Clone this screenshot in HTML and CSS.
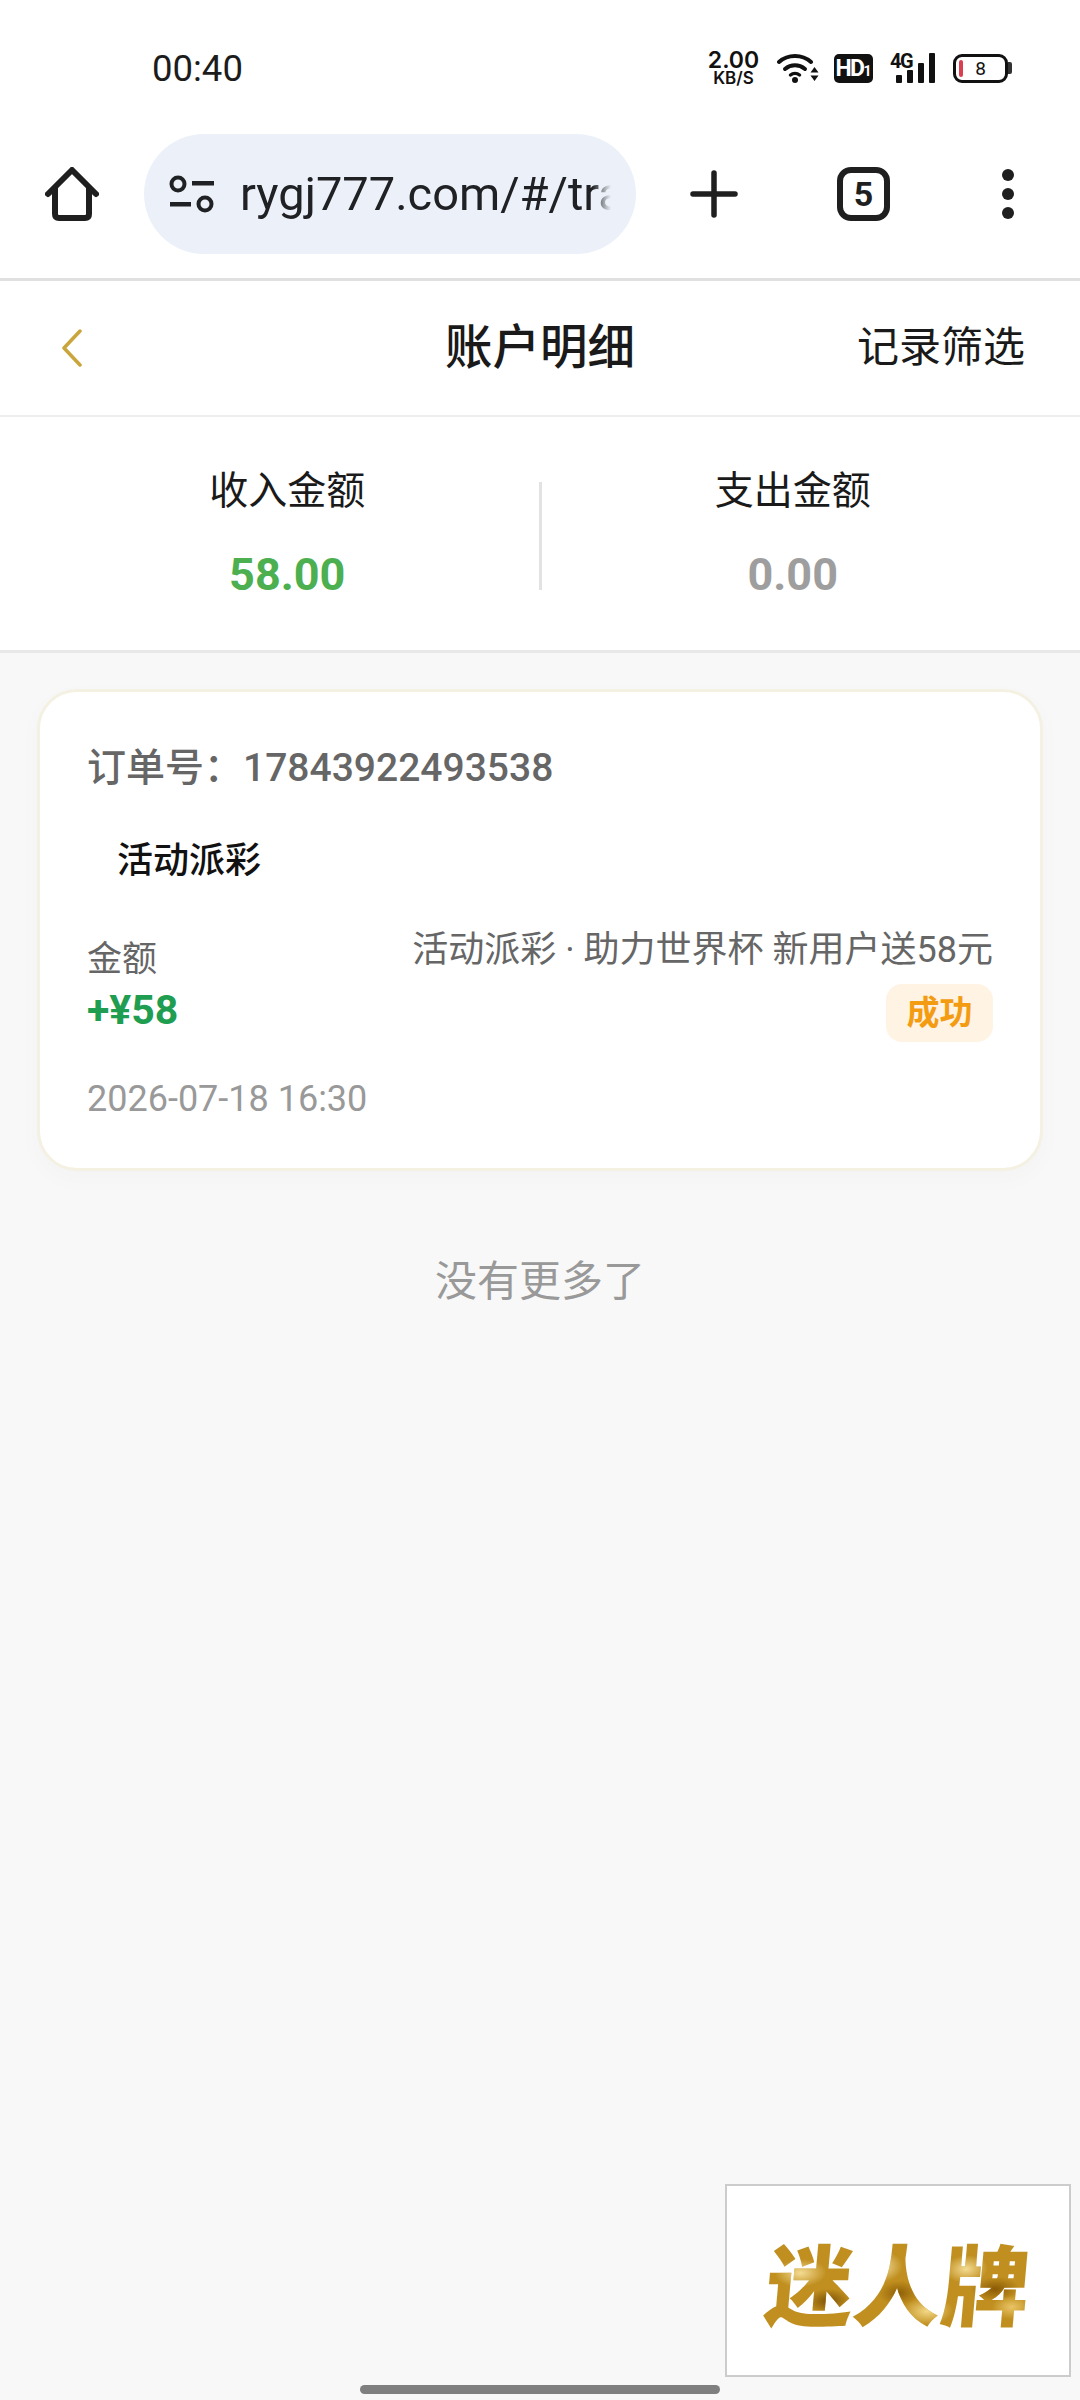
FILE: index.html
```html
<!DOCTYPE html>
<html lang="zh-CN">
<head>
    <meta charset="UTF-8">
    <meta name="viewport" content="width=device-width, initial-scale=1.0">
    <title>账户明细</title>
    <link rel="stylesheet" href="styles.css">
</head>
<body>
    <div class="status-bar">
        <span class="time">00:40</span>
        <div class="status-icons">
            <div class="speed"><span class="speed-num">2.00</span><span class="speed-unit">KB/S</span></div>
            <svg class="wifi" width="42" height="32" viewBox="0 0 42 32">
                <path d="M2 10 C11 2 25 2 34 10" fill="none" stroke="#111" stroke-width="4" stroke-linecap="round"/>
                <path d="M8 17 C14 12 22 12 28 17" fill="none" stroke="#111" stroke-width="4" stroke-linecap="round"/>
                <path d="M13.5 23 C16 21 20 21 22.5 23" fill="none" stroke="#111" stroke-width="3.5" stroke-linecap="round"/>
                <circle cx="18" cy="28" r="3" fill="#111"/>
                <path d="M33.5 20.5 L37.5 15 L41.5 20.5 Z M33.5 23.5 L37.5 29 L41.5 23.5 Z" fill="#111"/>
            </svg>
            <div class="hd">HD<span class="hd-one">1</span></div>
            <div class="signal">
                <span class="signal-type">4G</span>
                <div class="signal-bars">
                    <i class="bar bar-1"></i>
                    <i class="bar bar-2"></i>
                    <i class="bar bar-3"></i>
                    <i class="bar bar-4"></i>
                </div>
            </div>
            <div class="battery">
                <div class="battery-body"><i class="battery-level"></i><span class="battery-num">8</span></div>
                <i class="battery-cap"></i>
            </div>
        </div>
    </div>

    <div class="toolbar">
        <svg class="home-icon" width="54" height="54" viewBox="0 0 54 54">
            <path d="M3 27 L27 3 L51 27 M10 21 V47 Q10 51 14 51 H40 Q44 51 44 47 V21" fill="none" stroke="#1f1f1f" stroke-width="6" stroke-linecap="round" stroke-linejoin="round"/>
        </svg>
        <div class="url-pill">
            <svg class="tune-icon" width="45" height="38" viewBox="0 0 45 38">
                <circle cx="9" cy="9" r="6.5" fill="none" stroke="#202124" stroke-width="4"/>
                <rect x="23" y="6" width="22" height="4.5" fill="#202124"/>
                <rect x="1" y="27" width="21" height="4.5" fill="#202124"/>
                <circle cx="36" cy="29" r="6.5" fill="none" stroke="#202124" stroke-width="4"/>
            </svg>
            <span class="url-text">rygj777.com/#/transaction</span>
        </div>
        <svg class="plus-icon" width="48" height="48" viewBox="0 0 48 48">
            <path d="M24 3 V45 M3 24 H45" fill="none" stroke="#1f1f1f" stroke-width="5.5" stroke-linecap="round"/>
        </svg>
        <div class="tab-count">5</div>
        <div class="more-dots"><i></i><i></i><i></i></div>
    </div>

    <div class="nav-bar">
        <svg class="back-icon" width="21" height="38" viewBox="0 0 21 38">
            <path d="M19 2 L3 19 L19 36" fill="none" stroke="#c9a53c" stroke-width="3.5" stroke-linecap="round" stroke-linejoin="round"/>
        </svg>
        <h1 class="nav-title">账户明细</h1>
        <span class="nav-action">记录筛选</span>
    </div>

    <div class="summary">
        <div class="summary-col">
            <div class="summary-label">收入金额</div>
            <div class="summary-value income">58.00</div>
        </div>
        <div class="summary-divider"></div>
        <div class="summary-col">
            <div class="summary-label">支出金额</div>
            <div class="summary-value expense">0.00</div>
        </div>
    </div>

    <div class="card">
        <div class="order-no">订单号：17843922493538</div>
        <div class="order-type">活动派彩</div>
        <div class="order-info">
            <div class="amount-col">
                <div class="amount-label">金额</div>
                <div class="amount-value">+¥58</div>
            </div>
            <div class="desc-col">
                <div class="desc-text">活动派彩 · 助力世界杯 新用户送58元</div>
                <span class="status-badge">成功</span>
            </div>
        </div>
        <div class="order-date">2026-07-18 16:30</div>
    </div>

    <div class="no-more">没有更多了</div>

    <!-- floating brand box -->
    <div class="brand-box"><span class="brand-text">迷人牌</span></div>
    <div class="home-indicator"></div>
</body>
</html>
```

FILE: styles.css
```css
* {
    box-sizing: border-box;
}
html, body {
    height: 2400px;
}
body {
    margin: 0;
    position: relative;
    overflow: hidden;
    background-color: #f8f8f8;
    font-family: Roboto, "Noto Sans CJK SC", sans-serif;
    color: #1a1a1a;
}

/* status bar */
.status-bar {
    height: 134px;
    padding: 50px 68px 0 152px;
    display: flex;
    justify-content: space-between;
    align-items: flex-start;
    background-color: #fff;
}
.time {
    font-size: 36.5px;
    line-height: 38px;
    color: #1c1c1c;
}
.status-icons {
    display: flex;
    align-items: center;
    height: 36px;
}
.speed {
    width: 51px;
    display: flex;
    flex-direction: column;
    align-items: center;
    color: #111;
    font-family: Inter, Roboto, sans-serif;
    font-weight: 600;
}
.speed-num {
    font-size: 23px;
    line-height: 20px;
}
.speed-unit {
    font-size: 17px;
    line-height: 16px;
}
.wifi {
    margin-left: 18px;
}
.hd {
    width: 39px;
    height: 29px;
    margin-left: 15px;
    background-color: #111;
    border-radius: 5px;
    color: #fff;
    font-size: 23px;
    font-weight: 700;
    line-height: 29px;
    text-align: center;
    letter-spacing: -1.5px;
}
.hd-one {
    font-size: 14px;
    letter-spacing: 0;
}
.signal {
    position: relative;
    width: 45px;
    height: 30px;
    margin-left: 17px;
}
.signal-type {
    position: absolute;
    left: 0;
    top: -2px;
    font-size: 20px;
    font-weight: 700;
    line-height: 20px;
    letter-spacing: -1.5px;
    color: #111;
}
.signal-bars {
    height: 30px;
    padding-left: 6px;
    display: flex;
    align-items: flex-end;
    gap: 5px;
}
.bar {
    width: 6px;
    background-color: #111;
    border-radius: 1px;
}
.bar-1 { height: 8px; }
.bar-2 { height: 13px; }
.bar-3 { height: 20px; }
.bar-4 { height: 30px; }
.battery {
    display: flex;
    align-items: center;
    margin-left: 18px;
}
.battery-body {
    width: 55px;
    height: 29px;
    border: 3px solid #111;
    border-radius: 9px;
    padding-left: 3px;
    display: flex;
    align-items: center;
    position: relative;
}
.battery-level {
    width: 4px;
    height: 17px;
    background-color: #d8404f;
    border-radius: 2px;
}
.battery-num {
    flex: 1;
    padding-right: 7px;
    text-align: center;
    font-size: 19px;
    line-height: 23px;
    color: #111;
}
.battery-cap {
    width: 4px;
    height: 12px;
    background-color: #333;
    border-radius: 0 2px 2px 0;
}

/* browser toolbar */
.toolbar {
    height: 147px;
    padding: 0 0 24px 45px;
    display: flex;
    align-items: center;
    background-color: #fff;
    border-bottom: 3px solid #e0e0e0;
}
.url-pill {
    width: 492px;
    height: 120px;
    margin-left: 45px;
    padding: 0 25px;
    display: flex;
    align-items: center;
    gap: 26px;
    flex-shrink: 0;
    background-color: #ecf1f9;
    border-radius: 60px;
}
.tune-icon {
    flex-shrink: 0;
}
.url-text {
    flex: 1;
    overflow: hidden;
    white-space: nowrap;
    font-size: 47px;
    line-height: 64px;
    color: #202124;
    -webkit-mask-image: linear-gradient(to right, #000 95%, transparent);
    mask-image: linear-gradient(to right, #000 95%, transparent);
}
.plus-icon {
    margin-left: 54px;
}
.tab-count {
    width: 53px;
    height: 54px;
    margin-left: 99px;
    border: 6px solid #1f1f1f;
    border-radius: 14px;
    font-size: 34px;
    font-weight: 700;
    line-height: 42px;
    text-align: center;
    color: #1f1f1f;
}
.more-dots {
    margin-left: 112px;
    display: flex;
    flex-direction: column;
    gap: 7px;
}
.more-dots i {
    width: 12px;
    height: 12px;
    background-color: #1f1f1f;
    border-radius: 50%;
}

/* page header */
.nav-bar {
    height: 136px;
    padding: 0 55px;
    display: grid;
    grid-template-columns: 1fr auto 1fr;
    align-items: center;
    background-color: #fff;
    border-bottom: 2px solid #eee;
}
.back-icon {
    margin-left: 6px;
}
.nav-title {
    margin: 0;
    font-size: 47.5px;
    font-weight: 500;
    line-height: 60px;
    color: #1a1a1a;
}
.nav-action {
    justify-self: end;
    font-size: 42px;
    line-height: 58px;
    color: #1a1a1a;
}

/* income / expense */
.summary {
    height: 236px;
    padding: 49px 36px 0;
    display: flex;
    align-items: flex-start;
    background-color: #fff;
    border-bottom: 3px solid #e8e8e8;
}
.summary-col {
    flex: 1;
    text-align: center;
}
.summary-label {
    font-size: 39px;
    line-height: 50px;
    color: #1a1a1a;
}
.summary-value {
    margin-top: 31px;
    font-size: 45px;
    font-weight: 700;
    line-height: 56px;
}
.income {
    color: #4caf50;
}
.expense {
    color: #9e9e9e;
}
.summary-divider {
    width: 3px;
    height: 108px;
    margin-top: 16px;
    background-color: #e2e2e2;
}

/* record card */
.card {
    margin: 36px 37px 0;
    padding: 51px 47px 47px;
    background-color: #fff;
    border: 3px solid #f4f1e3;
    border-radius: 40px;
    box-shadow: 0 8px 24px rgba(0, 0, 0, 0.025);
}
.order-no {
    font-size: 39px;
    font-weight: 500;
    line-height: 50px;
    color: #666;
}
.order-type {
    margin-top: 46px;
    padding-left: 30px;
    font-size: 36px;
    font-weight: 500;
    line-height: 44px;
    color: #111;
}
.order-info {
    margin-top: 44px;
    display: flex;
    justify-content: space-between;
    align-items: flex-start;
}
.amount-col {
    padding-top: 10px;
}
.amount-label {
    font-size: 35px;
    line-height: 46px;
    color: #666;
}
.amount-value {
    margin-top: 2px;
    font-size: 41px;
    font-weight: 700;
    line-height: 50px;
    color: #1f9d50;
}
.desc-col {
    display: flex;
    flex-direction: column;
    align-items: flex-end;
}
.desc-text {
    font-size: 36px;
    line-height: 46px;
    color: #666;
}
.status-badge {
    width: 107px;
    height: 58px;
    margin-top: 11px;
    background-color: #fff3e3;
    border-radius: 16px;
    font-size: 33px;
    font-weight: 700;
    line-height: 58px;
    text-align: center;
    color: #f39c12;
}
.order-date {
    margin-top: 35px;
    font-size: 36px;
    line-height: 44px;
    color: #999;
}
.no-more {
    margin-top: 83px;
    font-size: 42px;
    line-height: 56px;
    text-align: center;
    color: #999;
}

/* overlays */
.brand-box {
    position: absolute;
    left: 725px;
    top: 2184px;
    width: 346px;
    height: 193px;
    display: flex;
    align-items: center;
    justify-content: center;
    background-color: #fff;
    border: 2px solid #ccc;
}
.brand-text {
    padding: 0 6px;
    font-family: "Noto Sans CJK SC", sans-serif;
    font-size: 88px;
    font-weight: 900;
    line-height: 100px;
    transform: skewX(-5deg);
    background-color: #c08f1f;
    background-image:
        radial-gradient(ellipse 26px 14px at 40px 42px, #f4dc94, transparent),
        radial-gradient(ellipse 22px 12px at 70px 70px, #7d5206, transparent),
        radial-gradient(ellipse 24px 16px at 118px 36px, #f6e3a6, transparent),
        radial-gradient(ellipse 20px 12px at 140px 62px, #8f5f08, transparent),
        radial-gradient(ellipse 26px 14px at 170px 80px, #f3d988, transparent),
        radial-gradient(ellipse 22px 14px at 205px 38px, #f4dc94, transparent),
        radial-gradient(ellipse 24px 12px at 236px 58px, #8a5a06, transparent),
        radial-gradient(ellipse 20px 12px at 254px 76px, #e9c566, transparent);
    -webkit-background-clip: text;
    background-clip: text;
    color: transparent;
}
.home-indicator {
    position: absolute;
    left: 360px;
    top: 2385px;
    width: 360px;
    height: 9px;
    background-color: #7f7f7f;
    border-radius: 5px;
}
```
